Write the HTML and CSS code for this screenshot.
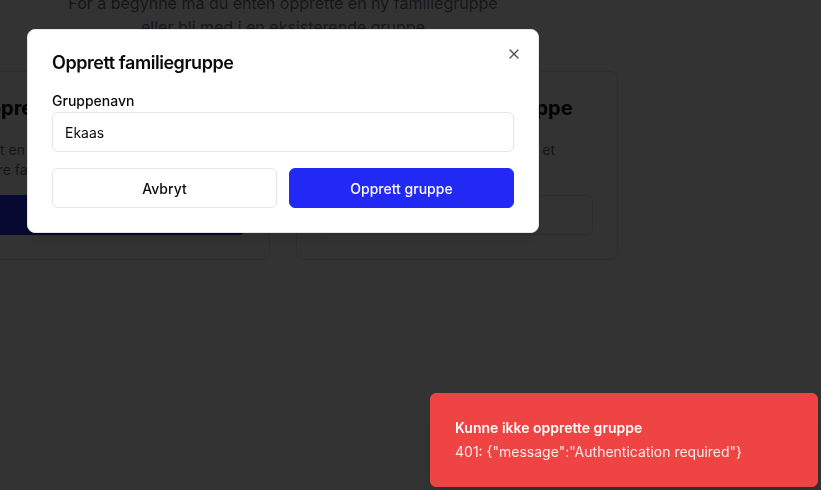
FILE: index.html
```html
<!DOCTYPE html>
<html lang="no">
<head>
<meta charset="utf-8">
<title>Familiegruppe</title>
<link rel="stylesheet" href="styles.css">
</head>
<body>
<main class="page">
  <p class="intro">For å begynne må du enten opprette en ny familiegruppe<br>eller bli med i en eksisterende gruppe</p>
  <div class="cards">
    <section class="card">
      <h2 class="card-title">Opprett ny gruppe</h2>
      <p class="card-desc">Start en ny familiegruppe og inviter andre familiemedlemmer</p>
      <button class="btn btn-primary card-btn">Opprett gruppe</button>
    </section>
    <section class="card">
      <h2 class="card-title">Bli med i en familiegruppe</h2>
      <p class="card-desc">Bruk invitasjonskode og bli med i et<br>eksisterende familie</p>
      <button class="btn btn-outline card-btn">Bli med</button>
    </section>
  </div>
</main>

<div class="overlay"></div>

<div class="dialog" role="dialog">
  <h2 class="dialog-title">Opprett familiegruppe</h2>
  <label class="label" for="name">Gruppenavn</label>
  <input class="input" id="name" type="text" value="Ekaas">
  <div class="actions">
    <button class="btn btn-outline">Avbryt</button>
    <button class="btn btn-primary">Opprett gruppe</button>
  </div>
  <button class="close" aria-label="Lukk">
    <svg width="16" height="16" viewBox="0 0 24 24" fill="none" stroke="currentColor" stroke-width="2" stroke-linecap="round" stroke-linejoin="round"><path d="M18 6 6 18"/><path d="m6 6 12 12"/></svg>
  </button>
</div>

<div class="toast">
  <div class="toast-title">Kunne ikke opprette gruppe</div>
  <div class="toast-desc">401: {"message":"Authentication required"}</div>
</div>
</body>
</html>
```

FILE: styles.css
```css
* { box-sizing: border-box; }

html, body {
  margin: 0;
  padding: 0;
  background: #ffffff;
  font-family: Inter, "Noto Sans", sans-serif;
  color: #0a0a0a;
  overflow: hidden;
  height: 100%;
}

.page {
  width: 670px;
  margin-left: -52px;
  margin-top: -9px;
}

.intro {
  margin: 0 0 32px;
  text-align: center;
  font-size: 16px;
  line-height: 24px;
  color: #71717a;
}

.cards {
  display: grid;
  grid-template-columns: minmax(0, 1fr) minmax(0, 1fr);
  gap: 26px;
}

.card {
  border: 1px solid #e5e5e5;
  border-radius: 8px;
  background: #fff;
  padding: 26px 24px 24px;
  display: flex;
  flex-direction: column;
  height: 189px;
}

.card-title {
  margin: 0;
  font-size: 20px;
  line-height: 20px;
  font-weight: 700;
  white-space: nowrap;
}

.card-desc {
  margin: 22px 0 0;
  font-size: 14px;
  line-height: 20px;
  color: #71717a;
}

.card-btn {
  margin-top: auto;
  width: 100%;
}

.btn {
  height: 40px;
  border-radius: 6px;
  font-family: inherit;
  font-size: 14px;
  font-weight: 500;
  cursor: pointer;
}

.btn-primary {
  background: #2329f5;
  border: 1px solid #2329f5;
  color: #fafafa;
}

.btn-outline {
  background: #ffffff;
  border: 1px solid #e5e5e5;
  color: #0a0a0a;
}

.overlay {
  position: fixed;
  inset: 0;
  background: rgba(0, 0, 0, 0.8);
}

.dialog {
  position: fixed;
  left: 27px;
  top: 29px;
  width: 512px;
  background: #ffffff;
  border: 1px solid #e5e5e5;
  border-radius: 8px;
  padding: 24px;
  box-shadow: 0 10px 15px -3px rgba(0,0,0,0.1), 0 4px 6px -4px rgba(0,0,0,0.1);
  display: flex;
  flex-direction: column;
}

.dialog-title {
  margin: 0;
  font-size: 18px;
  line-height: 18px;
  font-weight: 600;
  letter-spacing: -0.45px;
}

.label {
  display: block;
  margin-top: 22px;
  font-size: 14px;
  line-height: 14px;
  font-weight: 500;
}

.input {
  margin-top: 4px;
  height: 40px;
  width: 100%;
  border: 1px solid #e5e5e5;
  border-radius: 6px;
  padding: 0 12px;
  font-family: inherit;
  font-size: 14px;
  color: #0a0a0a;
  background: #fff;
  outline: none;
}

.actions {
  margin-top: 16px;
  display: grid;
  grid-template-columns: 1fr 1fr;
  gap: 12px;
}

.close {
  position: absolute;
  right: 16px;
  top: 16px;
  width: 16px;
  height: 16px;
  padding: 0;
  border: 0;
  background: none;
  color: #0a0a0a;
  opacity: 0.7;
  display: flex;
}

.toast {
  position: fixed;
  right: 3px;
  bottom: 3px;
  width: 388px;
  background: #ef4444;
  border: 1px solid #ef4444;
  border-radius: 6px;
  padding: 24px;
  color: #fafafa;
  display: flex;
  flex-direction: column;
  gap: 4px;
  box-shadow: 0 10px 15px -3px rgba(0,0,0,0.1);
}

.toast-title {
  font-size: 14px;
  line-height: 20px;
  font-weight: 600;
}

.toast-desc {
  font-size: 14px;
  line-height: 20px;
  opacity: 0.9;
}
```
